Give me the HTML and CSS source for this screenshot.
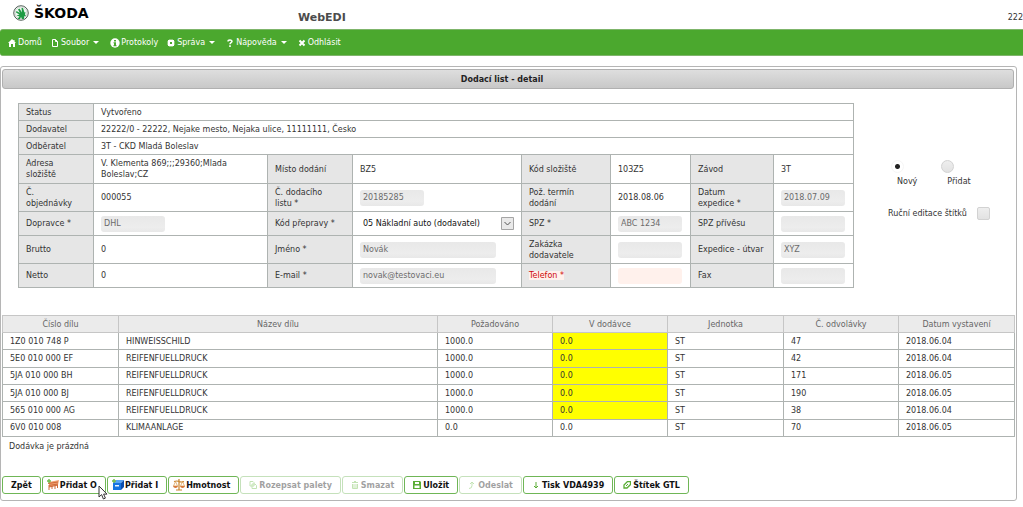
FILE: index.html
```html
<!DOCTYPE html>
<html lang="cs">
<head>
<meta charset="utf-8">
<title>WebEDI</title>
<link rel="stylesheet" href="styles.css">
</head>
<body>
<header class="top">
  <div class="brand">
    <svg class="brand-mark" viewBox="0 0 32 32" aria-hidden="true">
      <circle cx="16" cy="16" r="14.500" fill="#fff" stroke="#4c5a52" stroke-width="2"/>
      <circle cx="16" cy="16" r="12" fill="#eef7f0" stroke="#a9b5ad"/>
      <path d="M7 21l6-2-7-4 1-3 7 4-4-7 3-2 5 8-1-9h3l3 9 2-1-1 5 2 3-4 1v5h-4l-2-4-2 4H9l4-5z" fill="#1f9a44"/>
    </svg>
    <span class="brand-name">ŠKODA</span>
  </div>
  <h1 class="app-name">WebEDI</h1>
  <span class="account">222</span>
</header>

<nav class="menu">
  <a href="#"><svg viewBox="0 0 8 8"><path d="M4 0L0 4h1v4h2V5h2v3h2V4h1L6.500 2.500V1h-1v.6z"/></svg>Domů</a>
  <a href="#"><svg viewBox="0 0 8 8"><path d="M1.500.5h3l2 2v5h-5zM4.500.5v2h2" fill="none" stroke="#fff"/></svg>Soubor<i class="caret"></i></a>
  <a href="#" class="info"><svg class="icon-info" viewBox="0 0 10 10"><circle cx="5" cy="5" r="4.700"/><path d="M4 2h2v1.500H4zM3.500 4.300H6v3h.6v1H3.400v-1H4v-2h-.5z" fill="#4ba82e"/></svg>Protokoly</a>
  <a href="#"><svg viewBox="0 0 8 8"><path fill-rule="evenodd" d="M1 1h1.500V.3h1V1h1V.3h1V1H7v1.500h.7v1H7v1h.7v1H7V7H5.500v.7h-1V7h-1v.7h-1V7H1V5.500H.3v-1H1v-1H.3v-1H1zM3 3v2h2V3z"/></svg>Správa<i class="caret"></i></a>
  <a href="#"><svg viewBox="0 0 8 8"><path d="M2 2.500C2 .5 6 .5 6 2.300 6 3.800 4 3.600 4 5.200" fill="none" stroke="#fff" stroke-width="1.500"/><path d="M3.200 6.200h1.600V8H3.200z"/></svg>Nápověda<i class="caret"></i></a>
  <a href="#"><svg viewBox="0 0 8 8"><path d="M1.500 1.500l5 5M6.500 1.500l-5 5" stroke="#fff" stroke-width="2"/></svg>Odhlásit</a>
</nav>

<main class="panel">
  <h2 class="panel-title">Dodací list - detail</h2>

  <div class="detail">
    <table class="form">
      <colgroup><col class="f1"><col class="f2"><col class="f3"><col class="f4"><col class="f5"><col class="f6"><col class="f7"><col class="f8"></colgroup>
      <tr><th>Status</th><td colspan="7">Vytvořeno</td></tr>
      <tr><th>Dodavatel</th><td colspan="7">22222/0 - 22222, Nejake mesto, Nejaka ulice, 11111111, Česko</td></tr>
      <tr><th>Odběratel</th><td colspan="7">3T - CKD Mladá Boleslav</td></tr>
      <tr class="address"><th>Adresa<br>složiště</th><td>V. Klementa 869;;;29360;Mlada Boleslav;CZ</td><th>Místo dodání</th><td>BZ5</td><th>Kód složiště</th><td>103Z5</td><th>Závod</th><td>3T</td></tr>
      <tr class="tall"><th>Č.<br>objednávky</th><td>000055</td><th><label for="note">Č. dodacího<br>listu *</label></th><td><input id="note" value="20185285" disabled></td><th>Pož. termín dodání</th><td>2018.08.06</td><th><label for="ship">Datum<br>expedice *</label></th><td><input id="ship" value="2018.07.09" disabled></td></tr>
      <tr class="mid"><th><label for="carrier">Dopravce *</label></th><td><input id="carrier" value="DHL" disabled></td><th><label for="mode">Kód přepravy *</label></th><td><div class="select"><select id="mode"><option>05 Nákladní auto (dodavatel)</option></select><svg viewBox="0 0 13 13" aria-hidden="true"><path d="M.5.5h12v12H.5z" fill="#e9e9e9" stroke="#a5a5a5"/><path d="M3.500 5l3 3 3-3" fill="none" stroke="#555"/></svg></div></td><th><label for="spz">SPZ *</label></th><td><input id="spz" value="ABC 1234" disabled></td><th><label for="trailer">SPZ přívěsu</label></th><td><input id="trailer" disabled></td></tr>
      <tr class="tall"><th>Brutto</th><td>0</td><th><label for="name">Jméno *</label></th><td><input id="name" class="wide" value="Novák" disabled></td><th><label for="order">Zakázka dodavatele</label></th><td><input id="order" disabled></td><th><label for="unit">Expedice - útvar</label></th><td><input id="unit" value="XYZ" disabled></td></tr>
      <tr class="mid"><th>Netto</th><td>0</td><th><label for="mail">E-mail *</label></th><td><input id="mail" class="wide" value="novak@testovaci.eu" disabled></td><th><label for="phone" class="error">Telefon *</label></th><td><input id="phone" class="invalid"></td><th><label for="fax">Fax</label></th><td><input id="fax" disabled></td></tr>
    </table>

    <div class="options">
      <div class="radios">
        <label><input type="radio" name="kind" checked><span>Nový</span></label>
        <label><input type="radio" name="kind"><span>Přidat</span></label>
      </div>
      <label class="manual">Ruční editace štítků<input type="checkbox"></label>
    </div>
  </div>

  <table class="parts">
    <colgroup><col class="p1"><col class="p2"><col class="p3"><col class="p3"><col class="p1"><col class="p3"><col class="p1"></colgroup>
    <thead><tr><th>Číslo dílu</th><th>Název dílu</th><th>Požadováno</th><th>V dodávce</th><th>Jednotka</th><th>Č. odvolávky</th><th>Datum vystavení</th></tr></thead>
    <tbody>
      <tr><td>1Z0 010 748 P</td><td>HINWEISSCHILD</td><td>1000.0</td><td class="due">0.0</td><td>ST</td><td>47</td><td>2018.06.04</td></tr>
      <tr><td>5E0 010 000 EF</td><td>REIFENFUELLDRUCK</td><td>1000.0</td><td class="due">0.0</td><td>ST</td><td>42</td><td>2018.06.04</td></tr>
      <tr><td>5JA 010 000 BH</td><td>REIFENFUELLDRUCK</td><td>1000.0</td><td class="due">0.0</td><td>ST</td><td>171</td><td>2018.06.05</td></tr>
      <tr><td>5JA 010 000 BJ</td><td>REIFENFUELLDRUCK</td><td>1000.0</td><td class="due">0.0</td><td>ST</td><td>190</td><td>2018.06.05</td></tr>
      <tr><td>565 010 000 AG</td><td>REIFENFUELLDRUCK</td><td>1000.0</td><td class="due">0.0</td><td>ST</td><td>38</td><td>2018.06.04</td></tr>
      <tr><td>6V0 010 008</td><td>KLIMAANLAGE</td><td>0.0</td><td>0.0</td><td>ST</td><td>70</td><td>2018.06.05</td></tr>
    </tbody>
  </table>
  <p class="empty">Dodávka je prázdná</p>

  <div class="actions">
    <button type="button">Zpět</button>
    <button type="button" class="pictured"><svg class="big" viewBox="0 0 12 12"><path d="M2 3l10-2-1 5-9 2z" fill="#f0a070"/><path d="M1 4.500l10-1.500M1.500 6.500L11 5M2 8l9-2M2 7v4M5 7v3M8 6.500V10M10.500 6v3" stroke="#cf6a38" fill="none"/><path d="M2 0v4M0 2h4" stroke="#72b84a" stroke-width="1.400"/></svg>Přidat O<svg class="pointer" viewBox="0 0 10 15" aria-hidden="true"><path d="M1 1v11l2.600-2.400L5.400 14l2-.9-1.800-4H9z" fill="#fff" stroke="#333"/></svg></button>
    <button type="button" class="pictured"><svg class="big" viewBox="0 0 12 12"><path d="M1 4l3-3h8l-3 3z" fill="#58a5f4"/><path d="M1 4h8v7H1z" fill="#1674e0"/><path d="M9 4l3-3v7l-3 3z" fill="#0b4fae"/><path d="M3 6h4v1.500H3z" fill="#e9f3ff"/><path d="M2 0v4M0 2h4" stroke="#72b84a" stroke-width="1.400"/></svg>Přidat I</button>
    <button type="button" class="pictured"><svg class="big" viewBox="0 0 12 12"><path d="M6 0v11M1 2.500q3-1 5 0t5 0M3 11h6" stroke="#c8842c" stroke-width="1.200" fill="none"/><path d="M2.500 2.500L.5 7h4zM9.500 2.500L7.500 7h4z" fill="none" stroke="#d99a4a" stroke-width=".7"/><path d="M0 7h5q-.5 2-2.500 2T0 7zM7 7h5q-.5 2-2.500 2T7 7z" fill="#d8783a"/></svg>Hmotnost</button>
    <button type="button" disabled><svg viewBox="0 0 8 8"><path d="M1 .5h3l1 1V5H1zM3 3h3l1.500 1.500v3H3z" fill="#fff" stroke="#6cbb45"/></svg>Rozepsat palety</button>
    <button type="button" disabled><svg viewBox="0 0 8 8"><path d="M1 1.500h6M1.500 3v4.500h5V3M3 3v4M5 3v4M3 .5h2" fill="none" stroke="#6cbb45"/></svg>Smazat</button>
    <button type="button"><svg viewBox="0 0 8 8"><path fill-rule="evenodd" d="M0 0h7l1 1v7H0zM2 1v2h4V1zM1.500 4.500V7h5V4.500z" fill="#5aad35"/></svg>Uložit</button>
    <button type="button" disabled><svg viewBox="0 0 8 8"><path d="M1 7.500q3 0 3-3V1M2 3l2-2 2 2" fill="none" stroke="#6cbb45"/></svg>Odeslat</button>
    <button type="button"><svg viewBox="0 0 8 8"><path d="M4 1v6M2 5l2 2 2-2" fill="none" stroke="#5aad35"/></svg>Tisk VDA4939</button>
    <button type="button"><svg viewBox="0 0 8 8"><path d="M1 7V4l3.500-3.500h3v3L4 7z" fill="none" stroke="#5aad35" stroke-width="1.300"/><path d="M3 5l2-2" stroke="#5aad35"/></svg>Štítek GTL</button>
  </div>
</main>
</body>
</html>
```
FILE: styles.css
```css
* { box-sizing: border-box; }

body {
  margin: 0;
  background: #fff;
  color: #333;
  font: 8px/11px "DejaVu Sans", Verdana, sans-serif;
}

svg { display: block; flex: none; }
input, select, button { font: inherit; }

.top { display: flex; height: 29px; }
.brand { display: flex; align-items: center; gap: 5px; width: 298px; padding: 0 0 3px 13px; }
.brand-mark { width: 16px; height: 16px; }
.brand-name { color: #000; font-size: 14px; font-weight: bold; }
.app-name { flex: 1; margin: 0; padding-top: 12px; color: #4c4c4c; font-size: 11px; font-weight: bold; }
.account { padding-top: 12px; }

.menu {
  display: flex;
  align-items: center;
  gap: 9px;
  height: 27px;
  padding-left: 8px;
  background: #4ba82e;
  border: solid #7fb56b;
  border-width: 1px 0;
  border-radius: 3px 0 0 3px;
}
.menu a { display: flex; align-items: center; gap: 2px; color: #fff; text-decoration: none; }
.menu a.info { gap: 1px; }
.menu svg { width: 8px; height: 8px; fill: #fff; }
.menu .icon-info { width: 10px; height: 10px; }
.caret { margin: 0 2px; border: 3px solid transparent; border-top-color: #fff; border-bottom: 0; }

.panel {
  margin: 10px 6px 0 0;
  padding: 2px 2px 6px 1px;
  border: 1px solid #b5b5b5;
  border-radius: 3px;
}
.panel-title {
  margin: 0;
  padding: 4px 12px 3px 0;
  background: linear-gradient(#dedede, #c8c8c8);
  border: 1px solid #b0b0b0;
  border-radius: 3px;
  color: #222;
  font-size: 8px;
  text-align: center;
}

table { border-collapse: collapse; table-layout: fixed; }
th, td { border: 1px solid #aeb3b1; padding: 0 7px; text-align: left; font-weight: normal; }

.detail { display: grid; grid-template-columns: minmax(0, 835fr) minmax(0, 161fr); padding: 14px 0 27px 16px; }
.form { width: 100%; }
.form th { background: #e6e6e6; }
.form tr { height: 17px; }
.form .address { height: 29px; }
.form .tall { height: 28px; }
.form .mid { height: 24px; }
.f1 { width: 75px; } .f2 { width: 174px; } .f3 { width: 85px; } .f4 { width: 169px; }
.f5 { width: 89px; } .f6 { width: 80px; } .f7 { width: 83px; } .f8 { width: 80px; }

.form input {
  display: block;
  width: 64px;
  height: 16px;
  padding: 0 3px;
  border: 0;
  border-radius: 3px;
  background: linear-gradient(#e8e8e8, #ededed 70%, #e8e8e8);
  color: #6b6b6b;
}
.form .wide { width: 136px; }
.form .invalid { background: #fff1ec; }
.error { background: #fff1ec; color: #cd0a0a; }

.select { display: flex; align-items: center; width: 154px; }
.select select { flex: 1; min-width: 0; height: 16px; padding: 0 3px; border: 0; background: none; color: #111; appearance: none; }
.select svg { width: 13px; height: 13px; }

.options { padding: 57px 0 0 35px; }
.radios { display: flex; gap: 24px; padding-left: 3px; }
.radios label { display: flex; flex-direction: column; gap: 3px; }
.radios span { padding-left: 6px; }
.radios input, .manual input {
  appearance: none;
  width: 13px;
  height: 13px;
  margin: 0;
  border: 1px solid #d2d2d2;
  background: linear-gradient(#eee, #e2e2e2);
}
.radios input { border-radius: 50%; }
.radios input:checked { border-color: #f6f6f6; background: radial-gradient(circle, #222 0 2px, #fff 3px); }
.manual { display: flex; align-items: center; gap: 10px; padding-top: 20px; white-space: nowrap; }
.manual input { border-radius: 2px; }

.parts { width: 100%; height: 122px; }
.parts tr { height: 17px; }
.parts th { background: #ebebeb; border-color: #c6c6c6; color: #666; text-align: center; }
.parts .due { background: #ff0; }
.p1 { width: 116px; } .p2 { width: 319px; } .p3 { width: 115px; }

.empty { margin: 0; padding: 4px 7px 24px; }

.actions { display: flex; gap: 1px; }
.actions button {
  position: relative;
  display: flex;
  align-items: center;
  gap: 2px;
  height: 18px;
  padding: 0 8px;
  background: #fff;
  border: 1px solid #6fb656;
  border-radius: 3px;
  color: #111;
  font-weight: bold;
  white-space: nowrap;
}
.actions .pictured { gap: 1px; padding-left: 4px; }
.actions button:disabled { opacity: .4; }
.actions svg { width: 8px; height: 8px; }
.actions .big { width: 12px; height: 12px; }
.actions .pointer { position: absolute; z-index: 1; top: 8px; right: -3px; width: 10px; height: 15px; }
```
